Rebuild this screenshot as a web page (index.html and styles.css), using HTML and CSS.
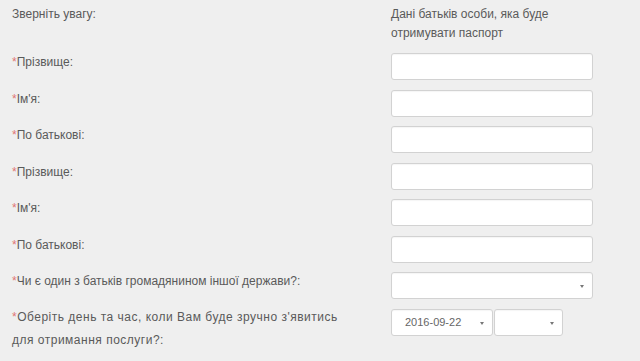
FILE: index.html
```html
<!DOCTYPE html>
<html lang="uk">
<head>
<meta charset="utf-8">
<link rel="stylesheet" href="styles.css">
</head>
<body>
<div class="form">
  <div class="head">
    <div class="head-left">Зверніть увагу:</div>
    <div class="head-right">Дані батьків особи, яка буде отримувати паспорт</div>
  </div>
  <div class="row"><label class="lbl"><span class="req">*</span>Прізвище:</label><div class="field"><div class="input"></div></div></div>
  <div class="row"><label class="lbl"><span class="req">*</span>Ім'я:</label><div class="field"><div class="input"></div></div></div>
  <div class="row"><label class="lbl"><span class="req">*</span>По батькові:</label><div class="field"><div class="input"></div></div></div>
  <div class="row"><label class="lbl"><span class="req">*</span>Прізвище:</label><div class="field"><div class="input"></div></div></div>
  <div class="row"><label class="lbl"><span class="req">*</span>Ім'я:</label><div class="field"><div class="input"></div></div></div>
  <div class="row"><label class="lbl"><span class="req">*</span>По батькові:</label><div class="field"><div class="input"></div></div></div>
  <div class="row"><label class="lbl"><span class="req">*</span>Чи є один з батьків громадянином іншої держави?:</label><div class="field"><div class="input select"><span class="arrow"></span></div></div></div>
  <div class="row"><label class="lbl lbl-two"><span class="req">*</span>Оберіть день та час, коли Вам буде зручно з'явитись для отримання послуги?:</label>
    <div class="field dates">
      <div class="input select date"><span class="val">2016-09-22</span><span class="arrow"></span></div>
      <div class="input select time"><span class="arrow"></span></div>
    </div>
  </div>
</div>
</body>
</html>
```

FILE: styles.css
```css
html, body {
  margin: 0;
  padding: 0;
  background: #efefef;
}
body {
  font-family: "Liberation Sans", Arial, sans-serif;
  font-size: 12px;
  color: #5a5a5a;
}
.form {
  padding: 5px 0 0 12px;
  display: flex;
  flex-direction: column;
  gap: 9.5px;
}
.head {
  display: grid;
  grid-template-columns: 379px 202px;
  line-height: 19px;
  margin-bottom: 0.5px;
}
.head-right {
  padding-right: 20px;
}
.row {
  display: grid;
  grid-template-columns: 379px 202px;
  align-items: start;
}
.lbl {
  line-height: 18px;
  padding-right: 42px;
}
.lbl-two {
  line-height: 23px;
  letter-spacing: 0.5px;
  margin-top: -3px;
}
.req {
  color: #e07575;
}
.input {
  box-sizing: border-box;
  height: 27px;
  background: #fff;
  border: 1px solid #d2d2d2;
  border-radius: 3px;
  box-shadow: inset 0 1px 1px rgba(0,0,0,0.04);
  position: relative;
}
.select .arrow {
  position: absolute;
  right: 8px;
  top: 12px;
  width: 0;
  height: 0;
  border-left: 2px solid transparent;
  border-right: 2px solid transparent;
  border-top: 3px solid #777;
}
.dates {
  display: flex;
  gap: 1px;
}
.date {
  width: 102px;
  display: flex;
  align-items: center;
  padding-left: 13px;
}
.time {
  width: 69px;
}
.val {
  font-size: 11px;
  color: #666;
}
```
